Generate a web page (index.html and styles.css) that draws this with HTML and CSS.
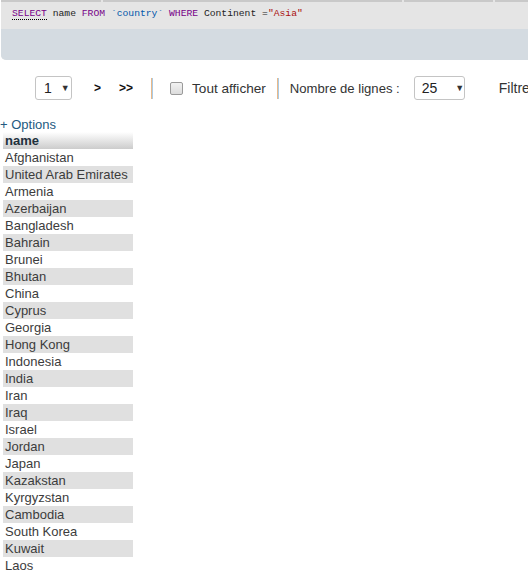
FILE: index.html
```html
<!DOCTYPE html>
<html lang="fr">
<head>
<meta charset="utf-8">
<title>Résultat</title>
<link rel="stylesheet" href="styles.css">
</head>
<body>
<div class="sqlbox">
  <div class="tabs">
    <span class="tab t1"></span><span class="tab t2"></span><span class="tab t3"></span><span class="tab t4"></span>
  </div>
  <div class="code"><span class="kw sel">SELECT</span> name <span class="kw">FROM</span> <span class="var">`country`</span> <span class="kw">WHERE</span> Continent =<span class="str">"Asia"</span></div>
  <div class="sqlfoot"></div>
</div>

<div class="toolbar">
  <div class="select s1"><span>1</span><span class="arrow">▼</span></div>
  <span class="nav n1">&gt;</span>
  <span class="nav n2">&gt;&gt;</span>
  <span class="sep s-a"></span>
  <span class="checkbox"></span>
  <span class="label l1">Tout afficher</span>
  <span class="sep s-b"></span>
  <span class="label l2">Nombre de lignes :</span>
  <div class="select s2"><span>25</span><span class="arrow">▼</span></div>
  <span class="label l3">Filtrer les lignes</span>
</div>

<div class="options">+ Options</div>

<table class="results">
  <thead><tr><th>name</th></tr></thead>
  <tbody>
    <tr><td>Afghanistan</td></tr>
    <tr><td>United Arab Emirates</td></tr>
    <tr><td>Armenia</td></tr>
    <tr><td>Azerbaijan</td></tr>
    <tr><td>Bangladesh</td></tr>
    <tr><td>Bahrain</td></tr>
    <tr><td>Brunei</td></tr>
    <tr><td>Bhutan</td></tr>
    <tr><td>China</td></tr>
    <tr><td>Cyprus</td></tr>
    <tr><td>Georgia</td></tr>
    <tr><td>Hong Kong</td></tr>
    <tr><td>Indonesia</td></tr>
    <tr><td>India</td></tr>
    <tr><td>Iran</td></tr>
    <tr><td>Iraq</td></tr>
    <tr><td>Israel</td></tr>
    <tr><td>Jordan</td></tr>
    <tr><td>Japan</td></tr>
    <tr><td>Kazakstan</td></tr>
    <tr><td>Kyrgyzstan</td></tr>
    <tr><td>Cambodia</td></tr>
    <tr><td>South Korea</td></tr>
    <tr><td>Kuwait</td></tr>
    <tr><td>Laos</td></tr>
  </tbody>
</table>
</body>
</html>
```
FILE: styles.css
```css
html, body {
  margin: 0;
  padding: 0;
  background: #fff;
  overflow: hidden;
}
body {
  font-family: "Liberation Sans", Arial, sans-serif;
  font-size: 13px;
  color: #444;
}

.sqlbox {
  margin-left: 1px;
  width: 540px;
  background: #e5e5e5;
  border-bottom-left-radius: 5px;
  overflow: hidden;
}
.tabs {
  display: flex;
  height: 2px;
  gap: 2px;
}
.tab {
  display: block;
  height: 2px;
  background: #c9c9c9;
  flex-shrink: 0;
}
.t1 { width: 100px; }
.t2 { width: 299px; }
.t3 { width: 89px; }
.t4 { flex: 1; }

.code {
  height: 27px;
  padding-left: 11px;
  font-family: "Liberation Mono", "DejaVu Sans Mono", monospace;
  font-size: 9.7px;
  line-height: 12px;
  padding-top: 6px;
  box-sizing: border-box;
  color: #222;
  white-space: pre;
}
.kw { color: #770088; }
.sel {
  border-bottom: 1px dotted #000;
}
.var { color: #0055aa; }
.str { color: #aa1111; }
.sqlfoot {
  height: 31px;
  background: #d4dbe1;
}

.toolbar {
  display: flex;
  align-items: center;
  height: 24px;
  margin-top: 16px;
  padding-left: 35px;
  white-space: nowrap;
  overflow: hidden;
}
.toolbar > * {
  flex-shrink: 0;
}
.select {
  box-sizing: border-box;
  height: 24px;
  border: 1px solid #c4c4c4;
  border-radius: 3px;
  display: flex;
  align-items: center;
  color: #222;
  font-size: 14px;
}
.s1 {
  width: 37px;
  padding-left: 8px;
}
.s1 .arrow { margin-left: 9px; }
.s2 {
  width: 51px;
  padding-left: 7px;
  margin-left: 14px;
}
.s2 .arrow { margin-left: 18px; }
.arrow {
  font-size: 9px;
  color: #333;
}
.nav {
  font-weight: bold;
  font-size: 12px;
  color: #111;
}
.n1 { margin-left: 22px; }
.n2 { margin-left: 18px; }
.sep {
  display: block;
  width: 2px;
  height: 21px;
  background: linear-gradient(to right, #e9b98a 50%, #a9cbe6 50%);
}
.s-a { margin-left: 18px; }
.s-b { margin-left: 11px; }
.checkbox {
  display: block;
  box-sizing: border-box;
  width: 13px;
  height: 13px;
  margin-left: 17px;
  border: 1px solid #9a9a9a;
  border-radius: 2px;
  background: linear-gradient(#f2f2f2, #dcdcdc);
}
.label {
  font-size: 14px;
  color: #333;
}
.l1 { margin-left: 9px; font-size: 13.6px; }
.l2 { margin-left: 11px; font-size: 13.1px; }
.l3 { margin-left: 34px; }

.options {
  margin-top: 17px;
  height: 15px;
  line-height: 15px;
  color: #235a81;
  font-size: 13px;
}

.results {
  border-collapse: collapse;
  margin-left: 3px;
  width: 130px;
}
.results th,
.results td {
  height: 17px;
  padding: 0 0 0 2px;
  line-height: 17px;
  text-align: left;
  font-size: 13px;
  white-space: nowrap;
}
.results th {
  font-weight: bold;
  color: #22313d;
  background: linear-gradient(#ffffff, #cccccc);
}
.results td {
  color: #3c3c3c;
}
.results tbody tr:nth-child(even) td {
  background: #e0e0e0;
}
```
